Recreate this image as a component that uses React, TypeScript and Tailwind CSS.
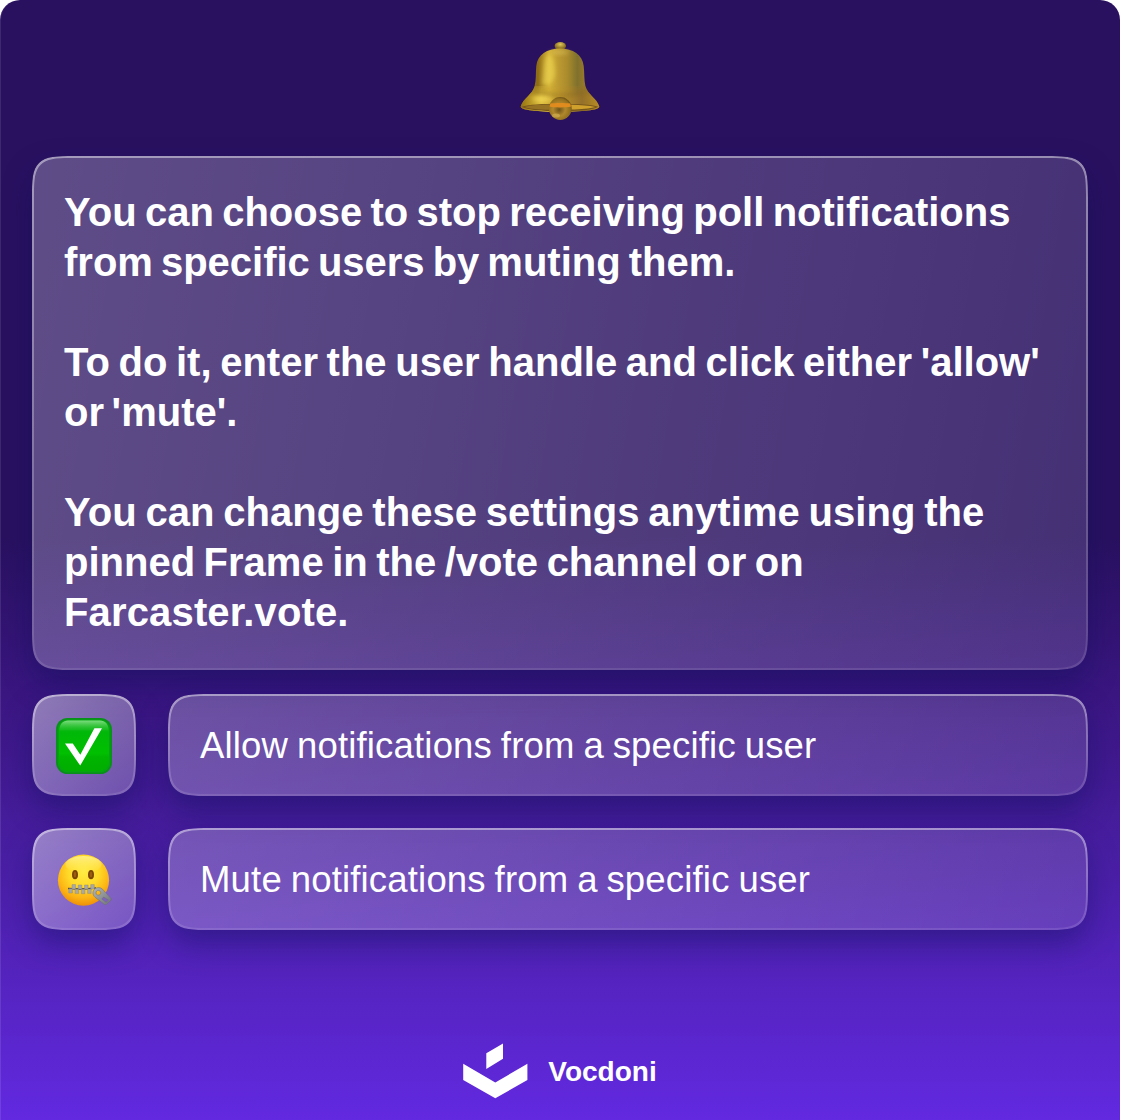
import type { ReactNode } from "react";

const glass =
  "relative [corner-shape:squircle] rounded-[44px] shadow-[0_14px_30px_0_rgba(8,16,86,0.4)] " +
  "before:pointer-events-none before:absolute before:inset-0 before:rounded-[44px] before:p-[2px] before:[corner-shape:squircle] " +
  "before:bg-[linear-gradient(180deg,rgba(255,255,255,0.44),rgba(255,255,255,0.1))] " +
  "before:[mask:linear-gradient(#000_0_0)_content-box_exclude,linear-gradient(#000_0_0)]";

const wideFill = "bg-[linear-gradient(100deg,rgba(255,255,255,0.25),rgba(255,255,255,0.13))]";
const tileFill = "bg-[linear-gradient(135deg,rgba(255,255,255,0.44),rgba(255,255,255,0.23))]";

function Bell() {
  return (
    <svg className="size-20" viewBox="0 0 80 80" aria-hidden="true">
      <defs>
        <linearGradient id="bell-body" x1="0" x2="1">
          <stop offset="0" stopColor="#8a6a14" />
          <stop offset="0.22" stopColor="#8f6d17" />
          <stop offset="0.36" stopColor="#d3b236" />
          <stop offset="0.47" stopColor="#bf9c31" />
          <stop offset="0.6" stopColor="#a98a2c" />
          <stop offset="0.72" stopColor="#7f712d" />
          <stop offset="0.8" stopColor="#94782a" />
          <stop offset="1" stopColor="#6e5413" />
        </linearGradient>
        <linearGradient id="bell-skirt" x1="0" x2="1">
          <stop offset="0" stopColor="#94720f" />
          <stop offset="0.26" stopColor="#dcbd3e" />
          <stop offset="0.5" stopColor="#bd952c" />
          <stop offset="0.78" stopColor="#94702a" />
          <stop offset="1" stopColor="#b88c22" />
        </linearGradient>
        <linearGradient id="bell-fade" x1="0" y1="0" x2="0" y2="1">
          <stop offset="0" stopColor="#fff" stopOpacity="0" />
          <stop offset="0.4" stopColor="#fff" />
        </linearGradient>
        <mask id="bell-skirt-mask">
          <rect y="42" width="80" height="38" fill="url(#bell-fade)" />
        </mask>
        <radialGradient id="bell-clapper" cx="0.45" cy="0.55" r="0.6">
          <stop offset="0" stopColor="#6d5219" />
          <stop offset="0.45" stopColor="#b0872c" />
          <stop offset="0.8" stopColor="#93701d" />
          <stop offset="1" stopColor="#5d4513" />
        </radialGradient>
        <radialGradient id="bell-knob" cx="0.5" cy="0.3" r="0.65">
          <stop offset="0" stopColor="#e0c75b" />
          <stop offset="1" stopColor="#74560d" />
        </radialGradient>
        <filter id="bell-soft" x="-50%" y="-50%" width="200%" height="200%">
          <feGaussianBlur stdDeviation="2" />
        </filter>
      </defs>
      <ellipse cx="40.300" cy="6" rx="5.700" ry="4" fill="url(#bell-knob)" />
      <path d="M40 8.400C27 8.400 17.400 14.500 16.300 26 15.600 33 16.300 40 14.600 46 12.500 54.500 3 58.500.7 66.500c0 3.800 17.300 5.300 39.300 5.300s39.300-1.500 39.300-5.300C77 58.500 67.500 54.500 65.400 46c-1.400-6-.900-13-1.700-20C62.600 14.500 53 8.400 40 8.400Z" fill="url(#bell-body)" />
      <path d="M14.600 46C12.500 54.500 3 58.500.7 66.500c0 3.800 17.300 5.300 39.300 5.300s39.300-1.500 39.300-5.300C77 58.500 67.500 54.500 65.400 46Z" fill="url(#bell-skirt)" mask="url(#bell-skirt-mask)" />
      <path d="M27 15c-4 7-3 20-5 29 8 4 14-5 13-13s-1-18-8-16Z" fill="#f0d954" opacity="0.6" filter="url(#bell-soft)" />
      <path d="M29 12c5-2 16-2 21 0-6 3-15 3-21 0Z" fill="#ead06c" opacity="0.5" filter="url(#bell-soft)" />
      <path d="M14 50c14 5 38 5 52 0l1 3c-14 5-40 5-54 0Z" fill="#7d5f19" opacity="0.4" filter="url(#bell-soft)" />
      <path d="M11 59c8-4 19-3 22 0-6 3.500-16 3.500-22 0Z" fill="#ffe45e" opacity="0.6" filter="url(#bell-soft)" />
      <path d="M1.500 66.700C9 64.400 22 63.700 40 63.700s31 .7 38.500 3c-5 3-20 4.500-38.500 4.500S6.500 69.700 1.500 66.700Z" fill="#76561a" />
      <path d="M4.500 67c7-1.900 15-2.300 25-2.500v5.300C19.500 69.600 10 69 4.500 67Z" fill="#967225" />
      <path d="M51 64.700c10 .2 18 .8 24.500 2.300-6 1.700-14.500 2.300-24.500 2.500Z" fill="#cfa02b" />
      <circle cx="40.300" cy="68.500" r="11.400" fill="url(#bell-clapper)" />
      <path d="M30.500 63.500c4-.8 16-.8 19.600 0l1 3c-5 1.200-17 1.200-21.700 0Z" fill="#df8b1e" />
      <ellipse cx="36" cy="75.500" rx="4" ry="2" fill="#e0bd61" opacity="0.5" />
    </svg>
  );
}

function CheckMark() {
  return (
    <svg className="relative top-px size-14" viewBox="0 0 56 56" aria-hidden="true">
      <defs>
        <linearGradient id="check-fill" x1="0" y1="0" x2="0" y2="1">
          <stop offset="0" stopColor="#16b81c" />
          <stop offset="0.25" stopColor="#00b808" />
          <stop offset="0.65" stopColor="#00c000" />
          <stop offset="0.72" stopColor="#00b400" />
          <stop offset="1" stopColor="#00ae00" />
        </linearGradient>
        <linearGradient id="check-gloss" x1="0" y1="0" x2="0" y2="1">
          <stop offset="0" stopColor="#7cdc7f" />
          <stop offset="1" stopColor="#22bd29" stopOpacity="0.4" />
        </linearGradient>
      </defs>
      <rect width="56" height="56" rx="11.500" fill="#0b8f1c" />
      <rect x="1.600" y="1.600" width="52.800" height="52.800" rx="10" fill="#06a312" />
      <rect x="3" y="2.500" width="50" height="50.500" rx="9" fill="url(#check-fill)" />
      <path d="M3.500 12.500C3.500 6 7 2.600 12 2.600h32c5 0 8.500 3.400 8.500 9.900Z" fill="url(#check-gloss)" />
      <path d="M9 25.600h7.800l7.500 11.200L38.400 10.300H46L24.200 47.600Z" fill="#fff" />
    </svg>
  );
}

function ZipperFace() {
  return (
    <svg className="relative top-[3px] size-14" viewBox="0 0 56 56" aria-hidden="true">
      <defs>
        <radialGradient id="face-fill" cx="0.5" cy="0.34" r="0.68">
          <stop offset="0" stopColor="#ffec42" />
          <stop offset="0.45" stopColor="#ffd928" />
          <stop offset="0.75" stopColor="#fcb414" />
          <stop offset="1" stopColor="#ec8a08" />
        </radialGradient>
        <linearGradient id="face-gloss" x1="0" y1="0" x2="0" y2="1">
          <stop offset="0" stopColor="#fff7a0" stopOpacity="0.75" />
          <stop offset="1" stopColor="#fff27a" stopOpacity="0" />
        </linearGradient>
        <linearGradient id="zip-metal" x1="0" y1="0" x2="1" y2="1">
          <stop offset="0" stopColor="#b4b7b9" />
          <stop offset="0.5" stopColor="#909496" />
          <stop offset="1" stopColor="#707476" />
        </linearGradient>
      </defs>
      <circle cx="27.500" cy="26.200" r="25.600" fill="url(#face-fill)" />
      <ellipse cx="27.500" cy="10.500" rx="18" ry="8.500" fill="url(#face-gloss)" />
      <ellipse cx="19" cy="20.600" rx="3" ry="4.700" fill="#7a4407" />
      <ellipse cx="35" cy="20.600" rx="3" ry="4.700" fill="#7a4407" />
      <ellipse cx="19" cy="20.600" rx="1.300" ry="3" fill="#9a5c10" />
      <ellipse cx="35" cy="20.600" rx="1.300" ry="3" fill="#9a5c10" />
      <path d="M12 34.500c9 .8 19 .5 28-.5" stroke="#4d4436" strokeWidth="1.400" fill="none" />
      <g fill="#a9a8a5" stroke="#85837f" strokeWidth="0.400">
        <path d="M16 30.600h3.600v4.300H16zM22.200 31h3.600v4h-3.600zM28.500 31h3.600v4h-3.600zM34.700 30.600h3.600v4.300h-3.600z" />
        <path d="M12.800 34.700h3.600v4.300h-3.600zM19.100 35.200h3.600v4.400h-3.600zM25.300 35.300h3.600v4.400h-3.600zM31.600 35h3.600v4.400h-3.600z" />
      </g>
      <path fillRule="evenodd" d="M39.200 34.600c2.200-1.600 5.600-1.300 7.400.6l8 8.900c.6.700.7 1.600.1 2.300l-4 3.700c-.7.700-1.700.7-2.500.1l-8.900-6.700c-3.200-2.600-3.100-6.700-.1-8.900Zm1.700 2.300c-1.300 1.200-1.200 3.100.2 3.900s3.300 0 3.600-1.500c.3-2.300-2.200-3.700-3.800-2.400Zm6.700 6.200-1.800 2 4.300 3.200 2.300-2.200Z" fill="url(#zip-metal)" stroke="#696c6f" strokeWidth="0.500" />
    </svg>
  );
}

function Option({ icon, children }: { icon: ReactNode; children: ReactNode }) {
  return (
    <div className="flex h-[102px] gap-8">
      <div className={`${glass} ${tileFill} flex w-[104px] items-center justify-center`}>{icon}</div>
      <div className={`${glass} ${wideFill} flex flex-1 items-center px-8 pt-[2px]`}>
        <span className="whitespace-nowrap text-[36.5px] leading-[50px] tracking-[0.18px] [word-spacing:-1.5px]">
          {children}
        </span>
      </div>
    </div>
  );
}

export default function App() {
  return (
    <div className="h-[1120px] w-[1121px] overflow-hidden bg-white font-['Liberation_Sans',Arial,sans-serif] text-white">
      <main className="flex h-full w-[1120px] flex-col rounded-t-[20px] border-l border-white/10 bg-[#291160] bg-[linear-gradient(180deg,#291160_0%,#291160_48%,#3a1681_62%,#4a1fa6_78%,#6229e0_100%)] bg-origin-border pl-[31px] pr-8 pt-10">
        <header className="flex justify-center">
          <Bell />
        </header>
        <section
          className={`${glass} ${wideFill} mt-9 flex h-[514px] flex-col gap-[50px] whitespace-nowrap px-8 pt-[31px] text-[40px] font-bold leading-[50px]`}
        >
          <p>
            <span className="block [word-spacing:-2.8px]">You can choose to stop receiving poll notifications</span>
            <span className="block [word-spacing:-3.1px]">from specific users by muting them.</span>
          </p>
          <p>
            <span className="block [word-spacing:-2.5px]">To do it, enter the user handle and click either 'allow'</span>
            <span className="block [word-spacing:-3.5px]">or 'mute'.</span>
          </p>
          <p>
            <span className="block tracking-[0.06px] [word-spacing:-2.5px]">You can change these settings anytime using the</span>
            <span className="block [word-spacing:-2.6px]">pinned Frame in the /vote channel or on</span>
            <span className="block tracking-[0.15px]">Farcaster.vote.</span>
          </p>
        </section>
        <div className="mt-6 flex flex-col gap-8">
          <Option icon={<CheckMark />}>Allow notifications from a specific user</Option>
          <Option icon={<ZipperFace />}>Mute notifications from a specific user</Option>
        </div>
        <footer className="mt-[113px] flex items-center justify-center gap-5">
          <svg className="h-14 w-[65px]" viewBox="0 0 65 56" fill="#fff" aria-hidden="true">
            <path d="M23.300 10.300 40 .4v15.400L23.300 26ZM.2 20.800 32.300 39.400 64.400 20.800V37L32.300 55.300.2 37Z" />
          </svg>
          <span className="pt-[2px] text-[28px] font-bold leading-[34px]">Vocdoni</span>
        </footer>
      </main>
    </div>
  );
}
